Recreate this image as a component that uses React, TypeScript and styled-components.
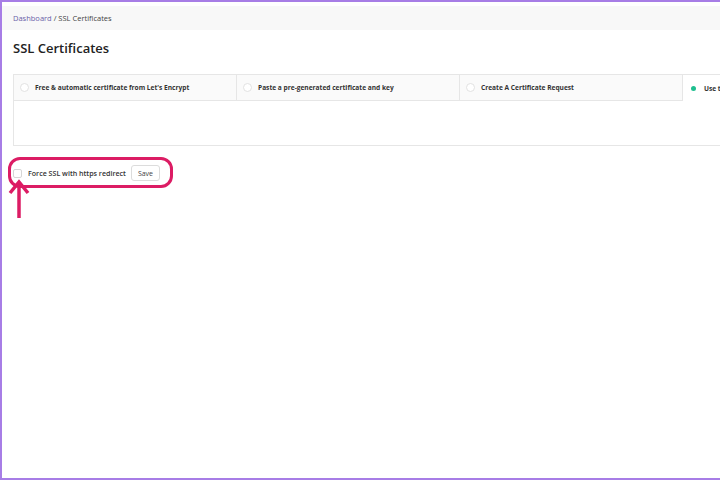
import styled, { createGlobalStyle } from "styled-components";

const Global = createGlobalStyle`
  html, body {
    margin: 0;
    padding: 0;
    overflow: hidden;
    background: #ffffff;
    font-family: "Open Sans", "Liberation Sans", sans-serif;
  }
`

const Frame = styled.div`
  position: relative;
  box-sizing: border-box;
  width: 720px;
  height: 480px;
  border-top: 2px solid #a77de6;
  border-left: 2px solid #a77de6;
  border-bottom: 2px solid #a77de6;
  padding-top: 4px;
  overflow: hidden;
`

const Crumbs = styled.div`
  height: 24px;
  display: flex;
  align-items: center;
  padding-left: 11px;
  background: #f8f8f8;
  font-size: 7.5px;
  color: #444;
  a {
    color: #6a5fa8;
    text-decoration: none;
  }
`

const Title = styled.h1`
  margin: 9px 0 0 11px;
  font-size: 13px;
  font-weight: 600;
  color: #222;
  line-height: 18px;
`

const TabBox = styled.div`
  margin: 17px 0 0 11px;
  width: 920px;
  height: 72px;
  border: 1px solid #e6e6e6;
  border-right: none;
  box-sizing: border-box;
`

const TabRow = styled.div`
  display: flex;
  height: 26px;
`

const Tab = styled.div<{ $active?: boolean }>`
  width: 223px;
  flex: none;
  box-sizing: border-box;
  display: flex;
  align-items: center;
  gap: 6px;
  padding-left: 6px;
  background: ${p => (p.$active ? "#ffffff" : "#fafafa")};
  border-right: ${p => (p.$active ? "none" : "1px solid #e6e6e6")};
  border-bottom: ${p => (p.$active ? "none" : "1px solid #e6e6e6")};
  font-size: 6.6px;
  font-weight: 700;
  color: #333;
  white-space: nowrap;
`

const Radio = styled.span<{ $on?: boolean }>`
  width: 9px;
  height: 9px;
  border-radius: 50%;
  box-sizing: border-box;
  display: flex;
  align-items: center;
  justify-content: center;
  border: ${p => (p.$on ? "none" : "1px solid #e2e2e2")};
  background: #fff;
  &::after {
    content: "";
    display: ${p => (p.$on ? "block" : "none")};
    width: 5px;
    height: 5px;
    border-radius: 50%;
    background: #1fbf8f;
  }
`

const ForceRow = styled.div`
  display: flex;
  align-items: center;
  margin: 18px 0 0 11px;
  height: 18px;
  gap: 6px;
  font-size: 7.1px;
  font-weight: 600;
  color: #333;
`

const Check = styled.span`
  width: 9px;
  height: 9px;
  box-sizing: border-box;
  border: 1px solid #d6d6d6;
  border-radius: 2px;
`

const SaveButton = styled.button`
  margin-left: -1px;
  height: 16px;
  padding: 0 6px;
  background: #fff;
  border: 1px solid #dcdcdc;
  border-radius: 3px;
  font-family: inherit;
  font-size: 7px;
  color: #444;
`

const Highlight = styled.div`
  position: absolute;
  left: 6px;
  top: 155px;
  width: 165px;
  height: 31px;
  box-sizing: border-box;
  border: 3px solid #dc1c64;
  border-radius: 12px;
  pointer-events: none;
`

const Arrow = styled.svg`
  position: absolute;
  left: 6px;
  top: 176px;
`

export default function App() {
  return (
    <Frame>
      <Global />
      <Crumbs>
        <a href="#">Dashboard</a>&nbsp;/ SSL Certificates
      </Crumbs>
      <Title>SSL Certificates</Title>
      <TabBox>
        <TabRow>
          <Tab><Radio />Free &amp; automatic certificate from Let's Encrypt</Tab>
          <Tab><Radio />Paste a pre-generated certificate and key</Tab>
          <Tab><Radio />Create A Certificate Request</Tab>
          <Tab $active><Radio $on />Use the certificate</Tab>
        </TabRow>
      </TabBox>
      <ForceRow>
        <Check />
        Force SSL with https redirect
        <SaveButton>Save</SaveButton>
      </ForceRow>
      <Highlight />
      <Arrow width="24" height="42" viewBox="0 0 24 42">
        <path d="M11 4 V40" stroke="#dc1c64" strokeWidth="3.5" fill="none" />
        <path d="M2 15 L11 4 L20 15" stroke="#dc1c64" strokeWidth="3.5" fill="none" strokeLinejoin="miter" />
      </Arrow>
    </Frame>
  )
}
